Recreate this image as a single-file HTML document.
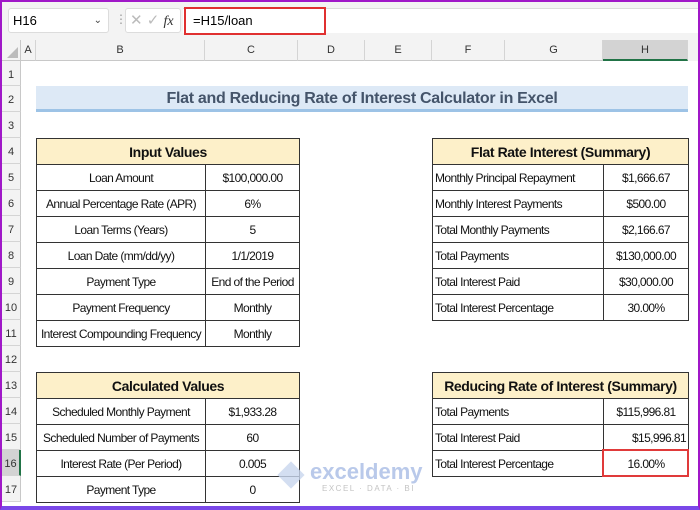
<!DOCTYPE html>
<html><head><meta charset="utf-8"><style>
*{margin:0;padding:0;box-sizing:border-box}
body{width:700px;height:510px;overflow:hidden;background:#fff;font-family:"Liberation Sans",sans-serif;position:relative}
.a{position:absolute}
.fr{position:absolute;left:0;top:0;width:700px;height:510px;border:2px solid #a018c8;border-bottom:4px solid #7a48e8;pointer-events:none;z-index:9}
.ch{position:absolute;top:40px;height:21px;font-size:11px;color:#333;text-align:center;line-height:21px;border-right:1px solid #d4d4d4;background:#f3f3f3;border-bottom:1px solid #c8c8c8}
.rh{position:absolute;left:2px;width:19px;height:26px;font-size:11px;color:#333;text-align:center;line-height:28px;background:#f3f3f3;border-bottom:1px solid #d4d4d4;border-right:1px solid #c8c8c8}
table{position:absolute;border-collapse:collapse;table-layout:fixed;font-size:12px;letter-spacing:-0.6px;color:#111}
td{border:1px solid #333;height:26px;padding:0 2px;white-space:nowrap;overflow:hidden}
td.c{text-align:center}
td.r{text-align:right}
th{border:1px solid #333;height:26px;background:#fdf0c9;font-size:14px;font-weight:bold;letter-spacing:-0.4px}
</style></head><body>
<div class="a" style="left:0;top:0;width:700px;height:40px;background:#f3f3f3"></div>
<div class="a" style="left:8px;top:8px;width:101px;height:25px;background:#fff;border:1px solid #dcdcdc;border-radius:3px;font-size:13px;line-height:23px;padding-left:4px">H16<span style="position:absolute;right:6px;font-size:10px;color:#444">&#8964;</span></div>
<div class="a" style="left:115px;top:12px;font-size:12px;color:#999;line-height:14px">&#8942;</div>
<div class="a" style="left:125px;top:8px;width:56px;height:25px;background:#fff;border:1px solid #dcdcdc;border-radius:3px;font-size:15px;color:#bbb;line-height:23px;padding-left:4px">✕ ✓ <i style="color:#333;font-family:'Liberation Serif',serif;font-size:14px">fx</i></div>
<div class="a" style="left:183px;top:8px;width:517px;height:25px;background:#fff;border-top:1px solid #dcdcdc"></div>
<div class="a" style="left:184px;top:7px;width:142px;height:28px;border:2px solid #e03030;font-size:13px;line-height:24px;padding-left:7px">=H15/loan</div>
<div class="a" style="left:0;top:40px;width:700px;height:21px;background:#f3f3f3"></div>
<div class="a" style="left:2px;top:40px;width:19px;height:21px;background:#f3f3f3;border-right:1px solid #c8c8c8;border-bottom:1px solid #c8c8c8"><div style="position:absolute;right:2px;bottom:2px;width:0;height:0;border-left:11px solid transparent;border-bottom:11px solid #bbb"></div></div>
<div class="ch" style="left:21px;width:15px">A</div>
<div class="ch" style="left:36px;width:169px">B</div>
<div class="ch" style="left:205px;width:93px">C</div>
<div class="ch" style="left:298px;width:67px">D</div>
<div class="ch" style="left:365px;width:67px">E</div>
<div class="ch" style="left:432px;width:73px">F</div>
<div class="ch" style="left:505px;width:98px">G</div>
<div class="ch" style="left:603px;width:85px;background:#d3d3d3;border-bottom:2px solid #217346">H</div>
<div class="rh" style="top:61px;height:25px">1</div>
<div class="rh" style="top:86px">2</div>
<div class="rh" style="top:112px">3</div>
<div class="rh" style="top:138px">4</div>
<div class="rh" style="top:164px">5</div>
<div class="rh" style="top:190px">6</div>
<div class="rh" style="top:216px">7</div>
<div class="rh" style="top:242px">8</div>
<div class="rh" style="top:268px">9</div>
<div class="rh" style="top:294px">10</div>
<div class="rh" style="top:320px">11</div>
<div class="rh" style="top:346px">12</div>
<div class="rh" style="top:372px">13</div>
<div class="rh" style="top:398px">14</div>
<div class="rh" style="top:424px">15</div>
<div class="rh" style="top:450px;background:#d3d3d3;border-right:2px solid #217346">16</div>
<div class="rh" style="top:476px">17</div>
<div class="a" style="left:36px;top:86px;width:652px;height:26px;background:#dde9f6;border-bottom:3px solid #9dc3e6;text-align:center;font-size:16px;font-weight:bold;color:#44546a;line-height:26px;letter-spacing:-0.3px">Flat and Reducing Rate of Interest Calculator in Excel</div>

<table style="left:36px;top:138px;width:263px">
<colgroup><col style="width:169px"><col style="width:94px"></colgroup>
<tr><th colspan="2">Input Values</th></tr>
<tr><td class="c">Loan Amount</td><td class="c">$100,000.00</td></tr>
<tr><td class="c">Annual Percentage Rate (APR)</td><td class="c">6%</td></tr>
<tr><td class="c">Loan Terms (Years)</td><td class="c">5</td></tr>
<tr><td class="c">Loan Date (mm/dd/yy)</td><td class="c">1/1/2019</td></tr>
<tr><td class="c">Payment Type</td><td class="c">End of the Period</td></tr>
<tr><td class="c">Payment Frequency</td><td class="c">Monthly</td></tr>
<tr><td class="c">Interest Compounding Frequency</td><td class="c">Monthly</td></tr>
</table>

<table style="left:36px;top:372px;width:263px">
<colgroup><col style="width:169px"><col style="width:94px"></colgroup>
<tr><th colspan="2">Calculated Values</th></tr>
<tr><td class="c">Scheduled Monthly Payment</td><td class="c">$1,933.28</td></tr>
<tr><td class="c">Scheduled Number of Payments</td><td class="c">60</td></tr>
<tr><td class="c">Interest Rate (Per Period)</td><td class="c">0.005</td></tr>
<tr><td class="c">Payment Type</td><td class="c">0</td></tr>
</table>

<table style="left:432px;top:138px;width:256px">
<colgroup><col style="width:171px"><col style="width:85px"></colgroup>
<tr><th colspan="2">Flat Rate Interest (Summary)</th></tr>
<tr><td>Monthly Principal Repayment</td><td class="c">$1,666.67</td></tr>
<tr><td>Monthly Interest Payments</td><td class="c">$500.00</td></tr>
<tr><td>Total Monthly Payments</td><td class="c">$2,166.67</td></tr>
<tr><td>Total Payments</td><td class="c">$130,000.00</td></tr>
<tr><td>Total Interest Paid</td><td class="c">$30,000.00</td></tr>
<tr><td>Total Interest Percentage</td><td class="c">30.00%</td></tr>
</table>

<table style="left:432px;top:372px;width:256px">
<colgroup><col style="width:171px"><col style="width:85px"></colgroup>
<tr><th colspan="2">Reducing Rate of Interest (Summary)</th></tr>
<tr><td>Total Payments</td><td class="c">$115,996.81</td></tr>
<tr><td>Total Interest Paid</td><td class="r">$15,996.81</td></tr>
<tr><td>Total Interest Percentage</td><td class="c">16.00%</td></tr>
</table>
<div class="a" style="left:602px;top:449px;width:87px;height:28px;border:2px solid #e03a3a"></div>

<div class="a" style="left:279px;top:463px;width:24px;height:24px;background:#c8d6ee;transform:rotate(45deg) scale(.8);opacity:.8"></div>
<div class="a" style="left:310px;top:459px;font-size:22px;font-weight:bold;color:#b9c9ea;letter-spacing:0">exceldemy</div>
<div class="a" style="left:322px;top:484px;font-size:8px;color:#c4c4c4;letter-spacing:1.5px">EXCEL · DATA · BI</div>
<div class="fr"></div>
</body></html>
